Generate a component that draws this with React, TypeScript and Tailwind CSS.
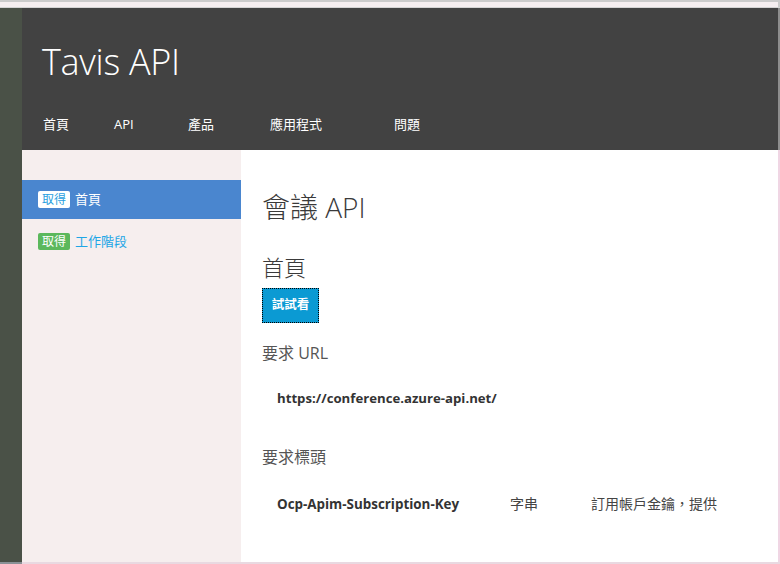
import React from "react";

const font = { fontFamily: '"Open Sans","Noto Sans CJK TC",sans-serif' };

export default function App() {
  return (
    <div
      className="w-[780px] h-[564px] overflow-hidden flex flex-col bg-white"
      style={font}
    >
      {/* top browser strip */}
      <div className="h-[2px] bg-[#cbcbcb] shrink-0" />
      <div className="h-[5px] bg-[#f5eef0] border-r-2 border-[#cbcbcb] shrink-0" />
      <div className="h-[1px] bg-[#d4d4d4] shrink-0" />
      <div className="flex flex-1 min-h-0">
        <div className="w-[22px] bg-[#4a5147] shrink-0" />
        <div className="flex-1 flex flex-col min-w-0">
          {/* header */}
          <div className="h-[142px] bg-[#424242] border-r-2 border-[#8e8e8e] shrink-0 flex flex-col">
            <div className="pl-[20px] pt-[32px] text-[36px] leading-[44px] font-light text-white tracking-[-0.3px]">
              Tavis API
            </div>
            <div className="flex pl-[21px] mt-[31px] text-[13px] leading-[18px] text-white">
              <div className="w-[71px]">首頁</div>
              <div className="w-[74px]">API</div>
              <div className="w-[82px]">產品</div>
              <div className="w-[124px]">應用程式</div>
              <div>問題</div>
            </div>
          </div>
          {/* body */}
          <div className="flex flex-1 min-h-0 border-r-2 border-[#f0d6e4]">
            <div className="w-[219px] bg-[#f6eeee] pt-[30px] shrink-0">
              <div className="h-[39px] bg-[#4a86cf] flex items-center pl-[16px]">
                <span className="bg-white text-[#2b9fe0] text-[12px] leading-[17px] px-[4px] rounded-[2px]">
                  取得
                </span>
                <span className="ml-[5px] text-white text-[13px] leading-[17px]">首頁</span>
              </div>
              <div className="h-[39px] mt-[3px] flex items-center pl-[16px]">
                <span className="bg-[#5cb85c] text-white text-[12px] leading-[17px] px-[4px] rounded-[2px]">
                  取得
                </span>
                <span className="ml-[5px] text-[#1ea6e6] text-[13px] leading-[17px]">工作階段</span>
              </div>
            </div>
            <div className="flex-1 bg-white pl-[21px] pt-[43px] text-[#333]">
              <div className="text-[28px] leading-[28px] font-light text-[#3a3a3a]">會議 API</div>
              <div className="mt-[35px] text-[22px] leading-[22px] font-light text-[#3a3a3a]">首頁</div>
              <div className="mt-[10px] w-[57px] h-[35px] bg-[#0b9ad3] border border-dotted border-black flex items-center justify-center text-white text-[12.5px] font-bold">
                試試看
              </div>
              <div className="mt-[22px] text-[16px] leading-[17px] text-[#555]">要求 URL</div>
              <div className="mt-[30px] pl-[15px] text-[13.2px] leading-[13px] font-bold text-[#333]">
                https://conference.azure-api.net/
              </div>
              <div className="mt-[44px] text-[16px] leading-[17px] text-[#555]">要求標頭</div>
              <div className="mt-[31px] pl-[15px] flex items-center leading-[14px] text-[#444]">
                <div className="w-[233px] font-bold text-[13.4px] text-[#333]">Ocp-Apim-Subscription-Key</div>
                <div className="w-[81px] text-[14px]">字串</div>
                <div className="text-[14px]">訂用帳戶金鑰，提供</div>
              </div>
            </div>
          </div>
        </div>
      </div>
      <div className="h-[2px] flex shrink-0">
        <div className="w-[22px] bg-[#8a9196]" />
        <div className="flex-1 bg-[#e9d9e1]" />
      </div>
    </div>
  );
}
